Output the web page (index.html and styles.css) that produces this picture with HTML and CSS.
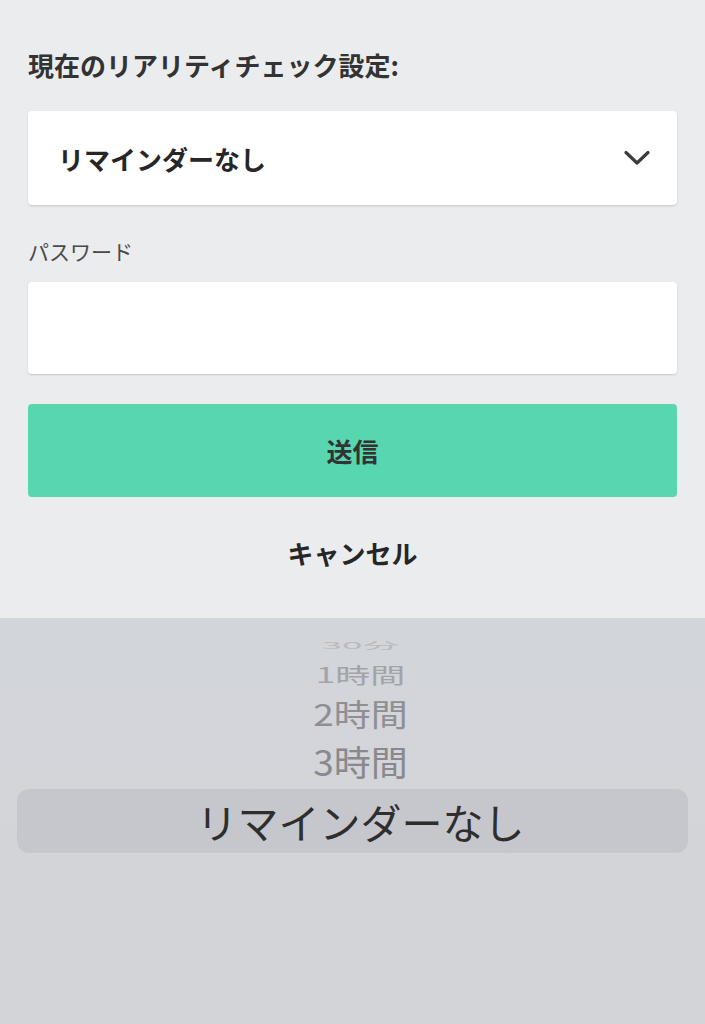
FILE: index.html
```html
<!DOCTYPE html>
<html lang="ja">
<head>
<meta charset="utf-8">
<title>リアリティチェック設定</title>
<link rel="stylesheet" href="styles.css">
</head>
<body>
<div class="page">
  <main class="form">
    <h1 class="heading">現在のリアリティチェック設定:</h1>
    <div class="select">
      <span class="select-value">リマインダーなし</span>
      <svg class="chevron" width="26" height="16" viewBox="0 0 26 16"><path d="M2 2.5 L13 13 L24 2.5" fill="none" stroke="#3d3d3d" stroke-width="3.2" stroke-linecap="round" stroke-linejoin="round"/></svg>
    </div>
    <label class="label">パスワード</label>
    <div class="input"></div>
    <button class="submit">送信</button>
    <div class="cancel">キャンセル</div>
  </main>
  <section class="picker">
    <div class="row r0">30分</div>
    <div class="row r1">1時間</div>
    <div class="row r2">2時間</div>
    <div class="row r3">3時間</div>
    <div class="row selected">リマインダーなし</div>
  </section>
</div>
</body>
</html>
```
FILE: styles.css
```css
html, body {
  margin: 0;
  padding: 0;
  background: #d2d4d9;
}
body {
  font-family: "Noto Sans CJK JP", "Noto Sans", sans-serif;
  width: 705px;
  height: 1024px;
  overflow: hidden;
}
.page {
  display: flex;
  flex-direction: column;
  height: 1024px;
}
.form {
  background: #ebecee;
  padding: 47px 28px 47px;
  display: flex;
  flex-direction: column;
}
.heading {
  margin: 0;
  font-size: 26px;
  line-height: 36px;
  font-weight: 700;
  color: #333333;
}
.select {
  margin-top: 28px;
  height: 94px;
  background: #ffffff;
  border-radius: 4px;
  box-shadow: 0 1px 2px rgba(0,0,0,0.16);
  display: flex;
  align-items: center;
  justify-content: space-between;
  padding: 0 27px 0 30px;
}
.select-value {
  font-size: 26px;
  font-weight: 700;
  color: #262626;
}
.chevron {
  display: block;
}
.label {
  margin-top: 32px;
  font-size: 21px;
  line-height: 28px;
  color: #4a4a4a;
}
.input {
  margin-top: 17px;
  height: 92px;
  background: #ffffff;
  border-radius: 4px;
  box-shadow: 0 1px 2px rgba(0,0,0,0.16);
}
.submit {
  margin-top: 30px;
  height: 93px;
  border: none;
  border-radius: 4px;
  background: #58d6b0;
  font-family: inherit;
  font-size: 26px;
  font-weight: 700;
  color: #333333;
  padding: 0;
}
.cancel {
  margin-top: 38px;
  text-align: center;
  font-size: 26px;
  line-height: 36px;
  font-weight: 700;
  color: #262626;
}
.picker {
  flex: 1;
  background: linear-gradient(#d2d5da, #d3d4d8);
  padding: 15px 17px 0;
  display: flex;
  flex-direction: column;
  align-items: stretch;
}
.row {
  text-align: center;
  font-size: 37px;
  color: #8c8c90;
  padding-left: 16px;
}
.r0 { height: 24px; line-height: 24px; transform: scaleY(0.25); color: #b9babe; }
.r1 { height: 34px; line-height: 34px; transform: scaleY(0.6); color: #a3a4a8; font-size: 35px; }
.r2 { height: 44px; line-height: 44px; transform: scaleY(0.82); color: #8f8f93; }
.r3 { height: 52px; line-height: 52px; transform: scaleY(0.95); color: #89898d; }
.selected {
  height: 64px;
  line-height: 64px;
  font-size: 41px;
  color: #2e2e2e;
  background: #c6c7cc;
  border-radius: 12px;
  margin-top: 2px;
}
```
